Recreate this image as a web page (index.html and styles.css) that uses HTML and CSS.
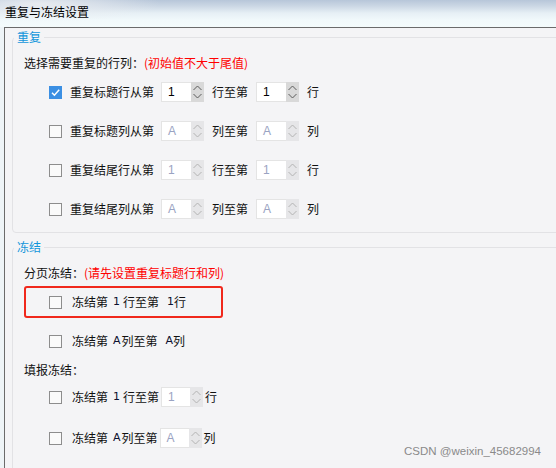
FILE: index.html
```html
<!DOCTYPE html>
<html lang="zh-CN">
<head>
    <meta charset="UTF-8">
    <title>重复与冻结设置</title>
    <link rel="stylesheet" href="styles.css">
</head>
<body>
    <div class="titlebar">重复与冻结设置</div>
    <div class="window">
        <fieldset class="group">
            <legend>重复</legend>
            <div class="group-body repeat">
                <div class="label-row">选择需要重复的行列：<span class="warn">(初始值不大于尾值)</span></div>

                <div class="row first">
                    <span class="cb checked"><svg width="13" height="13" viewBox="0 0 13 13"><path d="M3 6.8 L5.4 9.2 L10.2 3.8" fill="none" stroke="#fff" stroke-width="1.5"/></svg></span>
                    <span class="lbl">重复标题行从第</span>
                    <span class="spin"><span class="spin-val">1</span><span class="spin-btn"><svg width="13" height="20" viewBox="0 0 13 20"><path d="M2.5 8 L6.5 4 L10.5 8 M2.5 12 L6.5 16 L10.5 12" fill="none" stroke="#5c5c5c" stroke-width="1"/></svg></span></span>
                    <span class="lbl">行至第</span>
                    <span class="spin"><span class="spin-val">1</span><span class="spin-btn"><svg width="13" height="20" viewBox="0 0 13 20"><path d="M2.5 8 L6.5 4 L10.5 8 M2.5 12 L6.5 16 L10.5 12" fill="none" stroke="#5c5c5c" stroke-width="1"/></svg></span></span>
                    <span class="lbl">行</span>
                </div>

                <div class="row">
                    <span class="cb"></span>
                    <span class="lbl">重复标题列从第</span>
                    <span class="spin off"><span class="spin-val">A</span><span class="spin-btn"><svg width="13" height="20" viewBox="0 0 13 20"><path d="M2.5 8 L6.5 4 L10.5 8 M2.5 12 L6.5 16 L10.5 12" fill="none" stroke="#b4b4b4" stroke-width="1"/></svg></span></span>
                    <span class="lbl">列至第</span>
                    <span class="spin off"><span class="spin-val">A</span><span class="spin-btn"><svg width="13" height="20" viewBox="0 0 13 20"><path d="M2.5 8 L6.5 4 L10.5 8 M2.5 12 L6.5 16 L10.5 12" fill="none" stroke="#b4b4b4" stroke-width="1"/></svg></span></span>
                    <span class="lbl">列</span>
                </div>

                <div class="row">
                    <span class="cb"></span>
                    <span class="lbl">重复结尾行从第</span>
                    <span class="spin off"><span class="spin-val">1</span><span class="spin-btn"><svg width="13" height="20" viewBox="0 0 13 20"><path d="M2.5 8 L6.5 4 L10.5 8 M2.5 12 L6.5 16 L10.5 12" fill="none" stroke="#b4b4b4" stroke-width="1"/></svg></span></span>
                    <span class="lbl">行至第</span>
                    <span class="spin off"><span class="spin-val">1</span><span class="spin-btn"><svg width="13" height="20" viewBox="0 0 13 20"><path d="M2.5 8 L6.5 4 L10.5 8 M2.5 12 L6.5 16 L10.5 12" fill="none" stroke="#b4b4b4" stroke-width="1"/></svg></span></span>
                    <span class="lbl">行</span>
                </div>

                <div class="row">
                    <span class="cb"></span>
                    <span class="lbl">重复结尾列从第</span>
                    <span class="spin off"><span class="spin-val">A</span><span class="spin-btn"><svg width="13" height="20" viewBox="0 0 13 20"><path d="M2.5 8 L6.5 4 L10.5 8 M2.5 12 L6.5 16 L10.5 12" fill="none" stroke="#b4b4b4" stroke-width="1"/></svg></span></span>
                    <span class="lbl">列至第</span>
                    <span class="spin off"><span class="spin-val">A</span><span class="spin-btn"><svg width="13" height="20" viewBox="0 0 13 20"><path d="M2.5 8 L6.5 4 L10.5 8 M2.5 12 L6.5 16 L10.5 12" fill="none" stroke="#b4b4b4" stroke-width="1"/></svg></span></span>
                    <span class="lbl">列</span>
                </div>
            </div>
        </fieldset>

        <fieldset class="group freeze">
            <legend>冻结</legend>
            <div class="group-body">
                <div class="label-row">分页冻结：<span class="warn">(请先设置重复标题行和列)</span></div>

                <div class="highlight">
                    <div class="frow">
                        <span class="cb"></span>
                        <span class="lbl">冻结第</span>
                        <span class="num">1</span>
                        <span class="lbl after-num">行至第</span>
                        <span class="num far">1</span>
                        <span class="lbl">行</span>
                    </div>
                </div>

                <div class="frow page-col">
                    <span class="cb"></span>
                    <span class="lbl">冻结第</span>
                    <span class="num">A</span>
                    <span class="lbl after-a">列至第</span>
                    <span class="num far">A</span>
                    <span class="lbl">列</span>
                </div>

                <div class="label-row fill-label">填报冻结：</div>

                <div class="frow fill-row">
                    <span class="cb"></span>
                    <span class="lbl">冻结第</span>
                    <span class="num">1</span>
                    <span class="lbl after-num">行至第</span>
                    <span class="spin off tight"><span class="spin-val">1</span><span class="spin-btn"><svg width="13" height="20" viewBox="0 0 13 20"><path d="M2.5 8 L6.5 4 L10.5 8 M2.5 12 L6.5 16 L10.5 12" fill="none" stroke="#b4b4b4" stroke-width="1"/></svg></span></span>
                    <span class="lbl close">行</span>
                </div>

                <div class="frow fill-row second">
                    <span class="cb"></span>
                    <span class="lbl">冻结第</span>
                    <span class="num">A</span>
                    <span class="lbl after-a">列至第</span>
                    <span class="spin off tight"><span class="spin-val">A</span><span class="spin-btn"><svg width="13" height="20" viewBox="0 0 13 20"><path d="M2.5 8 L6.5 4 L10.5 8 M2.5 12 L6.5 16 L10.5 12" fill="none" stroke="#b4b4b4" stroke-width="1"/></svg></span></span>
                    <span class="lbl close">列</span>
                </div>
            </div>
        </fieldset>
    </div>
    <div class="watermark">CSDN @weixin_45682994</div>
</body>
</html>
```

FILE: styles.css
```css
* { box-sizing: border-box; }
body {
    margin: 0;
    width: 556px;
    height: 468px;
    overflow: hidden;
    position: relative;
    background: #eef4f7;
    font-family: "Noto Sans CJK SC", "Microsoft YaHei", sans-serif;
    font-size: 12px;
    color: #111;
}
.titlebar {
    height: 27px;
    line-height: 24px;
    padding-left: 5px;
    color: #000;
    background:
        radial-gradient(ellipse 120px 18px at 40px 4px, rgba(235,238,242,0.9), rgba(235,238,242,0)),
        linear-gradient(to bottom, #b7c6d9 0, #cbd7e4 6px, #e6eff5 13px, #f1f9fb 20px, #f4fbfc 27px);
}
.window {
    margin-left: 4px;
    height: 441px;
    border-top: 1px solid #6b6b6b;
    border-left: 1px solid #6b6b6b;
    background: #f4f4f6;
    overflow: hidden;
}
.group {
    margin: 1px -20px 0 7px;
    padding: 0;
    min-width: 0;
    border: 1px solid #e2e2e5;
    border-radius: 4px;
}
.group legend {
    margin-left: 1px;
    padding: 0 3px;
    line-height: 16px;
    color: #1296db;
}
.group.freeze {
    margin-top: 6px;
    height: 260px;
}
.group-body {
    padding: 8px 0 0 11px;
}
.group-body.repeat {
    padding-bottom: 13px;
}
.label-row {
    height: 20px;
    line-height: 20px;
}
.warn { color: #ff0000; }
.row {
    display: flex;
    align-items: center;
    height: 20px;
    margin-top: 19px;
    padding-left: 25px;
}
.row.first { margin-top: 9px; }
.cb {
    width: 13px;
    height: 13px;
    flex: none;
    border: 1px solid #8d8d8d;
    background: #fafafa;
}
.cb svg { display: block; margin: -1px; }
.cb.checked {
    border-color: #3b8fe3;
    background: #3b8fe3;
}
.lbl {
    line-height: 20px;
    white-space: nowrap;
}
.row .lbl { margin-left: 8px; }
.row .cb + .lbl { margin-left: 8px; }
.row .spin { margin-left: 8px; }
.row .cb + .lbl + .spin { margin-left: 7px; }
.spin {
    display: flex;
    width: 43px;
    height: 20px;
    flex: none;
}
.spin-val {
    flex: 1;
    padding-left: 6px;
    line-height: 18px;
    background: #fff;
    border: 1px solid #e4e4e4;
    border-right: none;
    color: #000;
    font-family: "Liberation Sans", sans-serif;
    font-size: 12px;
}
.spin-btn {
    width: 13px;
    background: #d9d9d9;
}
.spin-btn svg { display: block; }
.spin.off .spin-val { color: #9aa3c2; }
.spin.off .spin-btn { background: #e6e6e8; }
.spin.tight { width: 42px; margin-left: 2px; }

.highlight {
    width: 199px;
    height: 32px;
    margin-top: 3px;
    padding: 4px 0 0 23px;
    border: 2px solid #f0281c;
    border-radius: 3px;
}
.frow {
    display: flex;
    align-items: center;
    height: 20px;
}
.frow .cb + .lbl { margin-left: 10px; }
.page-col, .fill-row { padding-left: 25px; }
.page-col { margin-top: 13px; }
.fill-label { margin-top: 9px; }
.fill-row { margin-top: 7px; }
.fill-row.second { margin-top: 21px; }
.num {
    margin-left: 5px;
    line-height: 20px;
    font-family: "DejaVu Sans", sans-serif;
    font-size: 11px;
    color: #0d1030;
}
.num.far { margin-left: 8px; }
.after-num { margin-left: 3px; }
.after-a { margin-left: 1px; }
.close { margin-left: 2px; }
.watermark {
    position: absolute;
    left: 404px;
    top: 443px;
    font-family: "Liberation Sans", sans-serif;
    font-size: 11.5px;
    line-height: 16px;
    color: #8a8a8a;
}
```
